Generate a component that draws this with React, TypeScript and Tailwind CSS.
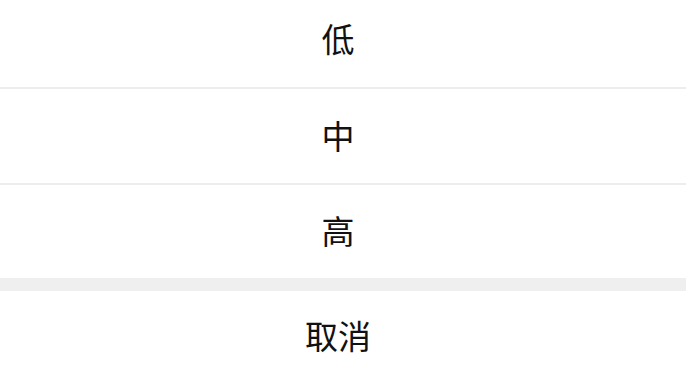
import React from "react";

const options = ["低", "中", "高"];

const App: React.FC = () => {
    return (
        <div
            className="w-[686px] h-[374px] overflow-hidden bg-white text-[#111111]"
            style={{ fontFamily: '"Noto Sans CJK SC", "Noto Sans", sans-serif' }}
        >
            <div className="flex flex-col">
                {options.map((label, i) => (
                    <div
                        key={label}
                        className={`flex items-center justify-center pr-[10px] text-[33px] leading-none ${
                            i === 0 ? "h-[89px] pb-[11px] border-b-2 border-[#ededed]" : i === 1 ? "h-[96px] pb-[2px] border-b-2 border-[#ededed]" : "h-[93px] pb-[2px]"
                        }`}
                    >
                        {label}
                    </div>
                ))}
                <div className="h-[13px] bg-[#efefef]"></div>
                <div className="h-[93px] pb-[4px] pr-[10px] flex items-center justify-center text-[33px] leading-none">
                    取消
                </div>
            </div>
        </div>
    );
};

export default App;
